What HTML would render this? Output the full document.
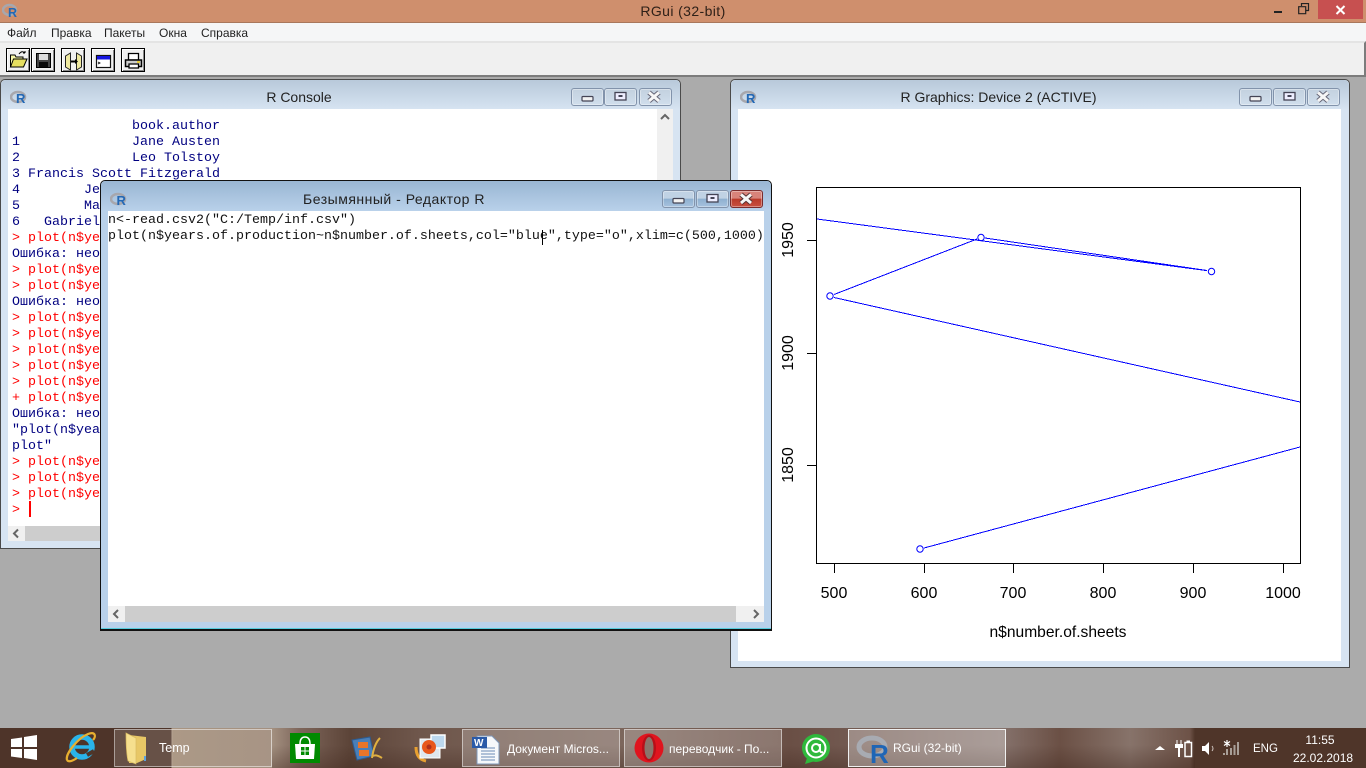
<!DOCTYPE html>
<html><head><meta charset="utf-8"><title>RGui</title>
<style>
html,body{margin:0;padding:0;width:1366px;height:768px;overflow:hidden;background:#ababab;font-family:"Liberation Sans",sans-serif}
div,span,svg{position:absolute;box-sizing:border-box}
.t{white-space:pre;line-height:16px}
.mono{font:13.33px/16px "Liberation Mono",monospace;white-space:pre;left:0}
.b{color:#000080}.r{color:#f00}.k{color:#111}
.menu{top:25px;font-size:12px;line-height:17px;color:#222;white-space:pre}
.tb{top:48px;width:24px;height:24px;background:#f0f0f0;border:1px solid #000;box-shadow:inset 1px 1px 0 #fff,inset -1px -1px 0 #888}
.win{border:1px solid #4a4a4a;border-radius:5px 5px 0 0;background:#d7e4f2}
.cap{left:0;right:0;top:0;height:30px;background:linear-gradient(#b8c9da,#d7e4f2);border-radius:5px 5px 0 0}
.title{top:8px;text-align:center;font-size:14px;line-height:18px;color:#222;white-space:pre}
.cb{width:33px;height:18px;border:1px solid #8293ab;border-radius:3px;background:linear-gradient(#c3d1df,#d0deec);box-shadow:inset 0 0 0 1px rgba(255,255,255,.35)}
.client{background:#fff;overflow:hidden}
.sb{background:#cdcdcd}.sbb{background:#f0f0f0;color:#666;font-size:0}
.tk{top:729px;height:38px;border:1px solid rgba(255,255,255,.5);background:rgba(255,255,255,.22);color:#fff;font-size:12.5px;line-height:36px;white-space:pre}
.tktxt{color:#fff;font-size:12px;white-space:pre;line-height:16px}
</style></head><body>

<!-- main title -->
<div style="left:0;top:0;width:1366px;height:23px;background:#cf8f6d;border-bottom:1px solid #a8775c"></div>
<svg style="left:2px;top:2px" width="18" height="17"><ellipse cx="7.5" cy="8" rx="6.5" ry="5" fill="none" stroke="#a7a7ad" stroke-width="2.5"/><text x="6" y="15" font-family="Liberation Sans" font-weight="bold" font-size="12.5" fill="#2368b5">R</text></svg>
<div class="t" style="left:0;width:1366px;top:3px;text-align:center;font-size:14px;letter-spacing:.4px;color:#2e2018">RGui (32-bit)</div>
<div style="left:1274px;top:11px;width:8px;height:2px;background:#222"></div>
<svg style="left:1298px;top:3px" width="12" height="12"><path d="M3.5 3V.5H10.5V7.5H8M.7 3.7H7.7V10.7H.7Z" fill="none" stroke="#222" stroke-width="1.2"/></svg>
<div style="left:1318px;top:0;width:45px;height:19px;background:#c75050"></div>
<svg style="left:1335px;top:5px" width="11" height="10"><path d="M1.5 1L9.5 9M9.5 1L1.5 9" stroke="#fff" stroke-width="2"/></svg>

<!-- menu -->
<div style="left:0;top:23px;width:1366px;height:18px;background:#f5f6f7"></div>
<div class="menu" style="left:7px">Файл</div>
<div class="menu" style="left:51px">Правка</div>
<div class="menu" style="left:104px">Пакеты</div>
<div class="menu" style="left:159px">Окна</div>
<div class="menu" style="left:201px">Справка</div>

<!-- toolbar -->
<div style="left:0;top:41px;width:1366px;height:36px;background:#f0f0f0;border-top:2px solid #e4e4e4;border-bottom:2px solid #7c7c7c;border-right:2px solid #7c7c7c"></div>
<div class="tb" style="left:6px"></div>
<div class="tb" style="left:31px"></div>
<div class="tb" style="left:61px"></div>
<div class="tb" style="left:91px"></div>
<div class="tb" style="left:121px"></div>
<svg style="left:0;top:41px" width="150" height="36">
 <path d="M10.5 26V14H15L16 16H23V26Z" fill="#f7f7a8" stroke="#000"/><path d="M10.5 26L13.5 18H27L23.5 26Z" fill="#e6df60" stroke="#000"/><path d="M19 13Q22 9 25 12M25 12L23 12M25 12L25 10" fill="none" stroke="#000"/>
 <path d="M36.5 12.5H50.5V26.5H36.5Z" fill="#444" stroke="#000"/><rect x="39" y="13" width="9" height="6" fill="#dcdcdc"/><rect x="39" y="21" width="9" height="5" fill="#0a0a0a"/>
 <path d="M65.5 15L70.5 12V29L65.5 26ZM81.5 15L76.5 12V29L81.5 26Z" fill="#efe9a0" stroke="#222"/><path d="M71 20.5H76" stroke="#000" stroke-width="2"/><path d="M75 18L78 20.5L75 23Z" fill="#000"/>
 <rect x="96.5" y="14.5" width="14" height="12" fill="#fff" stroke="#111" stroke-width="1.2"/><rect x="97" y="15" width="13" height="3.5" fill="#1414e0"/><path d="M98 21L100 22L98 23" fill="none" stroke="#000" stroke-width=".8"/>
 <path d="M128.5 12.5H138.5V19H128.5Z" fill="#fff" stroke="#000" stroke-width="1.3"/><path d="M125.5 19H141.5V25.5H125.5Z" fill="#ccc" stroke="#000" stroke-width="1.5"/><path d="M129 23H138.5V27H129Z" fill="#fff" stroke="#000" stroke-width="1.3"/><rect x="137" y="20" width="3" height="2" fill="#e8d040"/>
</svg>

<!-- R Console -->
<div class="win" style="left:0;top:79px;width:681px;height:470px">
 <div class="cap"></div>
 <svg style="left:9px;top:9px" width="18" height="17"><ellipse cx="8" cy="8" rx="7" ry="5" fill="none" stroke="#a7a7ad" stroke-width="2.5"/><text x="6" y="14" font-family="Liberation Sans" font-weight="bold" font-size="13" fill="#2368b5">R</text></svg>
 <div class="title" style="left:0;width:596px">R Console</div>
 <div class="cb" style="left:570px;top:8px"></div><div class="cb" style="left:603px;top:8px"></div><div class="cb" style="left:638px;top:8px"></div>
 <svg style="left:570px;top:8px" width="102" height="19"><rect x="11" y="8.5" width="11" height="4.5" rx="1" fill="#f2f2f2" stroke="#445" stroke-width="1.2"/><rect x="44" y="4.5" width="11" height="7.5" fill="#eef" stroke="#445" stroke-width="1.3"/><rect x="47.5" y="7" width="4" height="2" fill="#445"/><path d="M78 4.5L88 13M88 4.5L78 13" stroke="#667" stroke-width="5"/><path d="M78 4.5L88 13M88 4.5L78 13" stroke="#f6f6f6" stroke-width="3"/></svg>
 <div class="client" style="left:7px;top:29px;width:665px;height:432px">
  <div class="mono" style="left:4px;top:10px"><span class="b" style="position:static">               book.author
1              Jane Austen
2              Leo Tolstoy
3 Francis Scott Fitzgerald
4        Jerome
5        Mark
6   Gabriel
</span><span class="r" style="position:static">&gt; plot(n$years
</span><span class="b" style="position:static">Ошибка: неожиданный
</span><span class="r" style="position:static">&gt; plot(n$years
&gt; plot(n$years
</span><span class="b" style="position:static">Ошибка: неожиданный
</span><span class="r" style="position:static">&gt; plot(n$years
&gt; plot(n$years
&gt; plot(n$years
&gt; plot(n$years
&gt; plot(n$years
+ plot(n$years
</span><span class="b" style="position:static">Ошибка: неожиданный
"plot(n$years
plot"
</span><span class="r" style="position:static">&gt; plot(n$years
&gt; plot(n$years
&gt; plot(n$years
&gt; </span></div>
  <div style="left:21px;top:392px;width:2px;height:16px;background:#f00"></div>
  <div class="sbb" style="left:649px;top:0;width:16px;height:417px"></div>
  <svg style="left:649px;top:0" width="16" height="16"><path d="M4 10L8 6L12 10" fill="none" stroke="#666" stroke-width="2"/></svg>
  <div class="sb" style="left:17px;top:417px;width:632px;height:15px"></div>
  <div class="sbb" style="left:0;top:417px;width:17px;height:15px"></div>
  <svg style="left:0;top:417px" width="17" height="15"><path d="M10 3.5L6 7.5L10 11.5" fill="none" stroke="#666" stroke-width="2"/></svg>
 </div>
</div>

<!-- Graphics -->
<div class="win" style="left:730px;top:79px;width:620px;height:589px">
 <div class="cap"></div>
 <svg style="left:9px;top:9px" width="18" height="17"><ellipse cx="8" cy="8" rx="7" ry="5" fill="none" stroke="#a7a7ad" stroke-width="2.5"/><text x="6" y="14" font-family="Liberation Sans" font-weight="bold" font-size="13" fill="#2368b5">R</text></svg>
 <div class="title" style="left:0;width:535px">R Graphics: Device 2 (ACTIVE)</div>
 <div class="cb" style="left:508px;top:8px"></div><div class="cb" style="left:542px;top:8px"></div><div class="cb" style="left:576px;top:8px"></div>
 <svg style="left:508px;top:8px" width="102" height="19"><rect x="11" y="8.5" width="11" height="4.5" rx="1" fill="#f2f2f2" stroke="#445" stroke-width="1.2"/><rect x="45" y="4.5" width="11" height="7.5" fill="#eef" stroke="#445" stroke-width="1.3"/><rect x="48.5" y="7" width="4" height="2" fill="#445"/><path d="M79 4.5L89 13M89 4.5L79 13" stroke="#667" stroke-width="5"/><path d="M79 4.5L89 13M89 4.5L79 13" stroke="#f6f6f6" stroke-width="3"/></svg>
 <div class="client" style="left:7px;top:29px;width:603px;height:552px"></div>
</div>
<svg style="left:738px;top:109px" width="603" height="552">
 <g transform="translate(-738,-109)" font-family="Liberation Sans" font-size="16" fill="#000">
  <rect x="816.5" y="187.5" width="484" height="376" fill="none" stroke="#000" stroke-width="1" shape-rendering="crispEdges"/>
  <path d="M834.5 563V573M924.5 563V573M1013.5 563V573M1103.5 563V573M1193.5 563V573M1283.5 563V573M816 240.5H807M816 353.5H807M816 465.5H807" stroke="#000" stroke-width="1" shape-rendering="crispEdges"/>
  <g text-anchor="middle">
   <text x="834" y="598">500</text><text x="924" y="598">600</text><text x="1013" y="598">700</text><text x="1103" y="598">800</text><text x="1193" y="598">900</text><text x="1283" y="598">1000</text>
   <text x="1058" y="637" font-size="15.6">n$number.of.sheets</text>
   <text transform="translate(793,240) rotate(-90)">1950</text>
   <text transform="translate(793,353) rotate(-90)">1900</text>
   <text transform="translate(793,465) rotate(-90)">1850</text>
  </g>
  <g fill="none" stroke="#0000ff" stroke-width="1">
   <path shape-rendering="crispEdges" d="M817 219L1206 270.5M1207 270.5L985 238M977 239L834 294.5M834 297.5L1300 402M1300 447L924 548"/>
   <circle cx="1211.5" cy="271.5" r="3.2"/><circle cx="981" cy="237.5" r="3.2"/><circle cx="830" cy="296" r="3.2"/><circle cx="920" cy="549" r="3.2"/>
  </g>
 </g>
</svg>

<!-- Editor -->
<div style="left:100px;top:180px;width:672px;height:451px;background:#b9d1ea;border:1px solid #111;border-bottom:2px solid #111;border-radius:5px 5px 0 0;box-shadow:inset 0 -1px 0 #5cd">
 <div style="left:0;right:0;top:0;height:30px;background:linear-gradient(#99b6d3,#b9d1ea);border-radius:5px 5px 0 0"></div>
 <svg style="left:9px;top:10px" width="18" height="17"><ellipse cx="8" cy="8" rx="7" ry="5" fill="none" stroke="#a7a7ad" stroke-width="2.5"/><text x="6.5" y="14" font-family="Liberation Sans" font-weight="bold" font-size="13" fill="#2368b5">R</text></svg>
 <div class="title" style="left:0;width:586px;top:9px;letter-spacing:.5px">Безымянный - Редактор R</div>
 <div class="cb" style="left:561px;top:9px;background:linear-gradient(#c0d2e4 45%,#8fb0d0 50%,#a6c2de)"></div>
 <div class="cb" style="left:595px;top:9px;background:linear-gradient(#c0d2e4 45%,#8fb0d0 50%,#a6c2de)"></div>
 <div class="cb" style="left:629px;top:9px;background:linear-gradient(#d8837a 45%,#b93a2a 50%,#c85040);border-color:#7a2c2c"></div>
 <svg style="left:561px;top:9px" width="102" height="19"><rect x="11" y="8.5" width="11" height="4.5" rx="1" fill="#f2f2f2" stroke="#445" stroke-width="1.2"/><rect x="45" y="4.5" width="11" height="7.5" fill="#eef" stroke="#445" stroke-width="1.3"/><rect x="48.5" y="7" width="4" height="2" fill="#445"/><path d="M79 4.5L89 13M89 4.5L79 13" stroke="#533" stroke-width="5"/><path d="M79 4.5L89 13M89 4.5L79 13" stroke="#f6f6f6" stroke-width="3"/></svg>
 <div class="client" style="left:7px;top:30px;width:656px;height:411px">
  <div class="mono k" style="top:2px">n&lt;-read.csv2("C:/Temp/inf.csv")
plot(n$years.of.production~n$number.of.sheets,col="blue",type="o",xlim=c(500,1000)</div>
  <div style="left:434px;top:19px;width:1px;height:15px;background:#000"></div>
  <div class="sb" style="left:17px;top:395px;width:611px;height:16px"></div>
  <div class="sbb" style="left:0;top:395px;width:17px;height:16px"></div>
  <div class="sbb" style="left:628px;top:395px;width:28px;height:16px"></div>
  <svg style="left:0;top:395px" width="17" height="16"><path d="M10 4L6 8L10 12" fill="none" stroke="#666" stroke-width="2"/></svg>
  <svg style="left:640px;top:395px" width="16" height="16"><path d="M6 4L10 8L6 12" fill="none" stroke="#666" stroke-width="2"/></svg>
 </div>
</div>

<!-- Taskbar -->
<div style="left:0;top:728px;width:1366px;height:40px;background:linear-gradient(90deg,#4e3429 0,#4e3429 171px,#a99581 172px,#a39080 272px,#7d655a 300px,#5c4438 350px,#6f574c 420px,#7c665c 620px,#6a4f45 790px,#86736d 1000px,#6b5045 1060px,#87736a 1130px,#6d5247 1190px,#4f3529 1195px,#4f3529 1366px)"></div>
<div style="left:272px;top:745px;width:923px;height:23px;background:linear-gradient(rgba(60,35,25,0),rgba(60,35,25,.35))"></div>

<svg style="left:10px;top:734px" width="28" height="27"><path d="M1 5L12 3.5V13H1ZM14 3L27 1V13H14ZM1 15H12V24L1 22.5ZM14 15H27V26L14 24Z" fill="#fff"/></svg>
<svg style="left:64px;top:730px" width="34" height="34"><circle cx="18" cy="17" r="10" fill="none" stroke="#2ab4ea" stroke-width="5.5"/><path d="M10 17H27" stroke="#2ab4ea" stroke-width="3.5"/><path d="M23 25L30 21" stroke="#4f3529" stroke-width="4"/><path d="M3 30C1 24 14 8 24 4C32 1 32 7 29 10M3 30C5 33 10 30 13 28" fill="none" stroke="#e8b030" stroke-width="2.2"/></svg>

<div class="tk" style="left:114px;width:158px;background:linear-gradient(90deg,rgba(255,255,255,.14) 0,rgba(255,255,255,.14) 57px,rgba(255,255,255,.04) 58px);padding-left:44px">Temp</div>
<svg style="left:124px;top:732px" width="26" height="34"><path d="M5 3L22 5V27L13 31H5Z" fill="#e8c766"/><path d="M2 1L12 6V32L4 29Q2 20 2 1Z" fill="#f6df8e" stroke="#d9bb60" stroke-width=".7"/><rect x="20" y="24" width="2" height="5" fill="#5ba3e0"/></svg>

<svg style="left:290px;top:733px" width="30" height="30"><rect width="30" height="30" fill="#008a00"/><path d="M5 11H25L24 26H6Z" fill="#fff"/><path d="M10 11Q10 4 15 4Q20 4 20 11" fill="none" stroke="#fff" stroke-width="1.5"/><path d="M11 14H14.5V17.5H11ZM15.5 14H19V17.5H15.5ZM11 18.5H14.5V22H11ZM15.5 18.5H19V22H15.5Z" fill="#008a00"/></svg>
<svg style="left:350px;top:734px" width="34" height="28"><path d="M2 6L20 3L24 22L7 26Z" fill="#4a7fb8" stroke="#2c5c92"/><rect x="8" y="8" width="10" height="6" fill="#e8752a"/><rect x="9" y="16" width="10" height="6" fill="#e8752a"/><path d="M22 24Q24 10 30 4M23 22Q26 20 32 24" fill="none" stroke="#e0b040" stroke-width="2"/></svg>
<svg style="left:414px;top:733px" width="32" height="30"><path d="M2 14Q2 26 12 28" fill="none" stroke="#e8a030" stroke-width="3"/><rect x="6" y="6" width="20" height="19" fill="#dfe8ef" stroke="#fff"/><rect x="17" y="2" width="14" height="13" fill="#bcd8ee" stroke="#fff" stroke-width="1.5"/><circle cx="15" cy="14" r="7" fill="#e8581c"/><circle cx="15" cy="14" r="2.5" fill="#b0301a"/></svg>

<div class="tk" style="left:462px;width:158px"></div>
<svg style="left:472px;top:733px" width="30" height="32"><path d="M5 3H20L27 10V31H5Z" fill="#f6f8fb" stroke="#7f97b8"/><path d="M9 15H23M9 18H23M9 21H23M9 24H23M9 27H23" stroke="#6b8ab5"/><rect x="0" y="4" width="15" height="11" fill="#2a5aa8"/><text x="2" y="13" font-family="Liberation Sans" font-weight="bold" font-size="10" fill="#fff">W</text></svg>
<div class="tktxt" style="left:507px;top:741px">Документ Micros...</div>

<div class="tk" style="left:624px;width:158px"></div>
<svg style="left:634px;top:733px" width="30" height="30"><circle cx="15" cy="15" r="14.5" fill="#e0141e"/><ellipse cx="15" cy="15" rx="7" ry="13" fill="#b80f18"/><ellipse cx="15" cy="15" rx="4.5" ry="11" fill="#8a756b"/></svg>
<div class="tktxt" style="left:669px;top:741px">переводчик - По...</div>

<svg style="left:801px;top:733px" width="30" height="32"><circle cx="15" cy="15" r="14" fill="#2fb93c"/><path d="M4 31L7 22L14 28Z" fill="#2fb93c"/><circle cx="15" cy="15" r="9.5" fill="none" stroke="#fff" stroke-width="2"/><circle cx="15" cy="15" r="4" fill="none" stroke="#fff" stroke-width="2"/><path d="M19 11V17Q19 20 22 19" fill="none" stroke="#fff" stroke-width="2"/></svg>

<div class="tk" style="left:848px;width:158px;background:rgba(255,255,255,.3);border-color:#f0f0f0"></div>
<svg style="left:856px;top:733px" width="34" height="33"><ellipse cx="16" cy="14" rx="13" ry="9" fill="none" stroke="#a8abb2" stroke-width="5"/><text x="14" y="30" font-family="Liberation Sans" font-weight="bold" font-size="26" fill="#1f65b5">R</text></svg>
<div class="tktxt" style="left:893px;top:740px">RGui (32-bit)</div>

<svg style="left:1154px;top:744px" width="12" height="8"><path d="M1 6L6 2L11 6Z" fill="#fff"/></svg>
<svg style="left:1175px;top:739px" width="18" height="20"><path d="M2 1V5M6 1V5M0 5H8V9H5V18H3V9H0Z" fill="#fff"/><path d="M2 1V5M6 1V5" stroke="#fff"/><rect x="10" y="3.5" width="6.5" height="14" fill="none" stroke="#fff" stroke-width="1.5"/><rect x="11.5" y="1.5" width="3.5" height="2" fill="#fff"/></svg>
<svg style="left:1201px;top:741px" width="14" height="16"><path d="M1 5H4L8 1V14L4 10H1Z" fill="#fff"/><path d="M11 5Q13 7.5 11 10" fill="none" stroke="#cfc5bf"/></svg>
<svg style="left:1223px;top:739px" width="17" height="17"><path d="M3 10H5V16H3ZM7 9H9V16H7ZM10.5 6H12.5V16H10.5ZM14 3H16V16H14ZM0 14H2V16H0Z" fill="#a89f98"/><path d="M4 1V8M1 2.5L7 6.5M7 2.5L1 6.5" stroke="#fff" stroke-width="1.2"/></svg>
<div class="tktxt" style="left:1253px;top:741px;font-size:11.5px">ENG</div>
<div class="tktxt" style="left:1293px;width:54px;top:732px;text-align:center">11:55</div>
<div class="tktxt" style="left:1293px;width:54px;top:750px;text-align:center">22.02.2018</div>
</body></html>
